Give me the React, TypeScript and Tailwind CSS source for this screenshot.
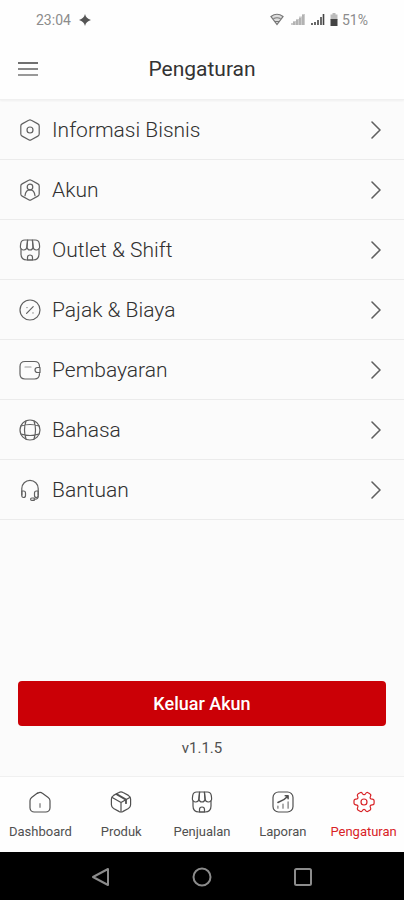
import type { ReactNode } from "react";

type IconProps = { children: ReactNode; className?: string; weight?: number };

function Icon({ children, className = "size-6", weight = 1.2 }: IconProps) {
  return (
    <svg
      viewBox="0 0 24 24"
      fill="none"
      stroke="currentColor"
      strokeWidth={weight}
      strokeLinecap="round"
      strokeLinejoin="round"
      aria-hidden="true"
      className={`shrink-0 ${className}`}
    >
      {children}
    </svg>
  );
}

const hexagon = (
  <path d="M21.200 8v8c0 .9-.5 1.700-1.300 2.100l-6.600 3.600c-.8.5-1.800.5-2.600 0l-6.600-3.600c-.8-.4-1.300-1.200-1.300-2.100V8c0-.9.5-1.700 1.300-2.100l6.600-3.600c.8-.5 1.800-.5 2.600 0l6.600 3.600c.8.400 1.300 1.200 1.300 2.100Z" />
);

const shop = (
  <>
    <path d="M3 11.200V16c0 4 2 6 6 6h6c4 0 6-2 6-6v-4.800" />
    <path d="M12 12c1.800 0 3.200-1.500 3-3.400L14.400 2H9.600L9 8.600C8.800 10.500 10.200 12 12 12Z" />
    <path d="M18.300 12c2 0 3.600-1.700 3.300-3.700l-.3-2.700C20.900 3 19.800 2 17.200 2h-2.800l.7 7c.2 1.700 1.600 3 3.200 3ZM5.700 12c1.600 0 3-1.300 3.200-3l.7-7H6.800C4.200 2 3.100 3 2.700 5.600l-.3 2.700C2.100 10.300 3.700 12 5.700 12Z" />
    <path d="M12 17c-1.700 0-2.500.8-2.500 2.500V22h5v-2.500c0-1.700-.8-2.500-2.500-2.500Z" />
  </>
);

const settings = [
  {
    label: "Informasi Bisnis",
    icon: (
      <>
        {hexagon}
        <circle cx="12" cy="12" r="3" />
      </>
    ),
  },
  {
    label: "Akun",
    icon: (
      <>
        {hexagon}
        <circle cx="12" cy="9" r="2.800" />
        <path d="M7 17.700c.4-3.400 2.200-5.900 5-5.900s4.600 2.500 5 5.900" />
      </>
    ),
  },
  { label: "Outlet & Shift", icon: shop },
  {
    label: "Pajak & Biaya",
    icon: (
      <>
        <circle cx="12" cy="12" r="10" />
        <path d="m8.600 15.300 6.600-6.600M9 9.500v.1M15 14.900v.1" />
      </>
    ),
  },
  {
    label: "Pembayaran",
    icon: (
      <>
        <path d="M21.500 15.500c0 3.500-2 5.500-5 5.500H7c-3 0-5-2-5-5V8.500c0-3 2-5 5-5h9.500c3 0 5 1.700 5 5" />
        <path d="M22 9.500h-2.300c-1.500 0-2.700 1.100-2.700 2.500s1.200 2.500 2.700 2.500H22Z" />
        <path d="M7 9h6" stroke="#999" />
      </>
    ),
  },
  {
    label: "Bahasa",
    icon: (
      <>
        <circle cx="12" cy="12" r="10" />
        <path d="M8 3a28.400 28.400 0 0 0 0 18M16 3a28.400 28.400 0 0 1 0 18M3 16a28.400 28.400 0 0 0 18 0M3 8a28.400 28.400 0 0 1 18 0" />
      </>
    ),
  },
  {
    label: "Bantuan",
    icon: (
      <>
        <path d="M3.800 17V10.500a8.200 8.200 0 0 1 16.400 0V17" />
        <path d="M3.800 13h1.700c1.200 0 2 .8 2 2v2.500c0 1.200-.8 2-2 2s-1.700-.8-1.700-2ZM20.200 13h-1.700c-1.200 0-2 .8-2 2v2.500c0 1.200.8 2 2 2s1.700-.8 1.700-2Z" />
        <path d="M20.200 18c0 2-1.200 3.200-3 3.200h-1M16.200 20h-2.400a1.200 1.200 0 0 0 0 2.400h2.400Z" />
      </>
    ),
  },
];

const tabs = [
  {
    label: "Dashboard",
    icon: (
      <>
        <path d="M9.800 2.800 3.600 7.500C2.700 8.200 2 9.600 2 10.700v7C2 20.100 4 22 6.300 22h11.400c2.300 0 4.300-1.900 4.300-4.300v-6.900c0-1.200-.8-2.700-1.800-3.400l-5.800-4.100c-1.300-1-3.400-.9-4.600 0Z" />
        <path d="M12 14v3" stroke="#aaa" strokeWidth="2" />
      </>
    ),
  },
  {
    label: "Produk",
    icon: (
      <>
        <path d="m3.200 7.400 8.800 5.100 8.800-5.100M12 21.600v-9.100" />
        <path d="M9.900 2.500 4.600 5.400c-1.200.7-2.200 2.300-2.200 3.700v5.700c0 1.400 1 3 2.200 3.700l5.300 2.900c1.200.7 3 .7 4.200 0l5.300-2.900c1.200-.7 2.200-2.300 2.200-3.700V9.100c0-1.400-1-3-2.200-3.700l-5.300-2.900c-1.200-.7-3-.7-4.200 0Z" />
        <path d="M17 13.200V9.600L7.500 4.100" strokeWidth="1.800" />
      </>
    ),
  },
  { label: "Penjualan", icon: shop },
  {
    label: "Laporan",
    icon: (
      <>
        <rect x="2" y="2" width="20" height="20" rx="5.500" />
        <path d="M6.900 18.200v-2.100M12 18.200V14M17.100 18.200v-6.300" stroke="#777" />
        <path d="m6.900 12.500 1-.5c3.700-1.300 6.700-3.400 9.200-6.100M14.200 5.800h2.900v2.900" strokeWidth="1.500" />
      </>
    ),
  },
  {
    label: "Pengaturan",
    icon: (
      <>
        <circle cx="12" cy="12" r="3" />
        <path d="M2 12.900v-1.800c0-1 .9-1.900 1.900-1.900 1.800 0 2.600-1.300 1.700-2.900a1.900 1.900 0 0 1 .7-2.600l1.700-1c.8-.5 1.800-.2 2.300.6l.1.200c.9 1.600 2.400 1.600 3.300 0l.1-.2c.5-.8 1.500-1.100 2.300-.6l1.700 1c.9.500 1.200 1.700.7 2.600-.9 1.600-.2 2.900 1.700 2.900 1 0 1.900.8 1.900 1.900v1.800c0 1-.8 1.900-1.900 1.900-1.800 0-2.600 1.300-1.700 2.900.5.900.2 2.100-.7 2.600l-1.700 1c-.8.500-1.800.2-2.300-.6l-.1-.2c-.9-1.600-2.400-1.600-3.300 0l-.1.200c-.5.800-1.500 1.100-2.300.6l-1.700-1a1.900 1.900 0 0 1-.7-2.600c.9-1.600.1-2.900-1.700-2.900-1 0-1.900-.8-1.900-1.900Z" />
      </>
    ),
  },
];

function StatusBar() {
  return (
    <div className="flex h-[38px] items-center justify-between px-9 pt-0.5 text-sm text-[#8c8c8c]">
      <div className="flex items-center gap-2">
        <span>23:04</span>
        <svg viewBox="0 0 12 12" className="size-3" fill="#555" aria-hidden="true">
          <path d="M6 0c.8 3.300 2.500 5 6 6-3.500 1-5.200 2.700-6 6-.8-3.300-2.500-5-6-6 3.500-1 5.200-2.700 6-6Z" />
        </svg>
      </div>
      <div className="flex items-center">
        <svg viewBox="0 0 60 16" width="60" height="16" aria-hidden="true">
          <path d="M1 4.500q6-4.500 12 0L7 12.500Z" fill="#ddd" />
          <path d="M1 4.500q6-4.500 12 0L7 12.500ZM3.500 6.500q3.500-1.500 7 0M5 9.500h4" fill="none" stroke="#777" strokeWidth="1.200" />
          <path d="M21 13v-2h2V9h3V7h3V4.500h3V2h3v11Z" fill="#ccc" />
          <path d="M24 13v-3M27 13V8M30 13V6M33 13V3" stroke="#999" />
          <path d="M42 13v-2M45 13v-3M48 13V8M51 13V5M53.500 13V2" stroke="#444" strokeWidth="1.600" />
        </svg>
        <svg viewBox="0 0 8 14" width="8" height="14" className="mr-1" aria-hidden="true">
          <path d="M2.500 0h3v1.500H7.500V7h-7V1.500h2Z" fill="#bbb" />
          <path d="M.5 6h7v7h-7Z" fill="#444" />
        </svg>
        <span>51%</span>
      </div>
    </div>
  );
}

export default function App() {
  return (
    <div className="flex min-h-screen flex-col bg-[#fbfbfb] font-['Roboto',sans-serif]">
      <header className="border-b border-[#f0f0f0] bg-[#fefefe] shadow-xs">
        <StatusBar />
        <div className="grid h-[61px] grid-cols-[1fr_auto_1fr] items-center px-4">
          <button type="button" aria-label="Menu" className="flex size-6 flex-col items-center justify-center gap-1">
            <span className="h-0.5 w-5 bg-[#707070]" />
            <span className="h-0.5 w-5 bg-[#888]" />
            <span className="h-0.5 w-5 bg-[#999]" />
          </button>
          <h1 className="text-[21px] leading-7 text-[#333]">Pengaturan</h1>
        </div>
      </header>

      <main className="flex flex-1 flex-col">
        <ul>
          {settings.map(({ label, icon }) => (
            <li key={label} className="border-b border-[#ebebeb]">
              <button type="button" className="flex h-[59px] w-full items-center gap-2.5 pr-4 pl-[18px] text-left text-[#606060]">
                <Icon>{icon}</Icon>
                <span className="flex-1 text-[21px] leading-7 font-light text-[#303030]">{label}</span>
                <Icon weight={1.600}>
                  <path d="m8 4 8 8-8 8" />
                </Icon>
              </button>
            </li>
          ))}
        </ul>

        <div className="mt-auto flex flex-col items-center px-[18px] pb-[18px]">
          <button type="button" className="h-[45px] w-full rounded-sm bg-[#cb0006] text-lg font-medium text-white">
            Keluar Akun
          </button>
          <p className="mt-3 text-[15px] leading-5 text-[#505050]">v1.1.5</p>
        </div>
      </main>

      <nav className="grid h-[76px] grid-cols-5 border-t border-[#f0f0f0] bg-[#fefefe]">
        {tabs.map(({ label, icon }) => {
          const active = label === "Pengaturan";
          return (
            <a
              key={label}
              href="#"
              aria-current={active ? "page" : undefined}
              className={`flex flex-col items-center gap-2 pt-[13px] text-[13px] leading-5 ${active ? "text-[#d82226]" : "text-[#505050]"}`}
            >
              <Icon>{icon}</Icon>
              <span>{label}</span>
            </a>
          );
        })}
      </nav>

      <div className="grid h-12 grid-cols-[1fr_24px_1fr] items-center bg-black pt-0.5 text-[#8c8c8c]">
        <button type="button" aria-label="Kembali" className="mr-[77px] justify-self-end">
          <Icon weight={2}>
            <path d="M19 4v16L4 12Z" />
          </Icon>
        </button>
        <button type="button" aria-label="Beranda">
          <Icon weight={2}>
            <circle cx="12" cy="12" r="8.500" />
          </Icon>
        </button>
        <button type="button" aria-label="Aplikasi terbaru" className="ml-[77px] justify-self-start">
          <Icon weight={2}>
            <rect x="4" y="4" width="16" height="16" rx="1.500" />
          </Icon>
        </button>
      </div>
    </div>
  );
}
